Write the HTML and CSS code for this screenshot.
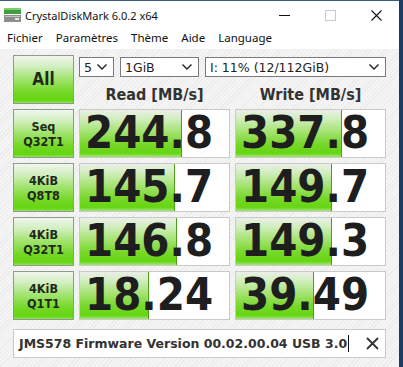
FILE: index.html
```html
<!DOCTYPE html>
<html lang="fr">
<head>
    <meta charset="UTF-8">
    <title>CrystalDiskMark 6.0.2 x64</title>
    <link rel="stylesheet" href="styles.css">
</head>
<body>
    <div class="window">
        <div class="titlebar">
            <svg class="app-icon" width="17" height="14" viewBox="0 0 17 14">
                <rect x="0" y="0" width="17" height="6" fill="#3f9f3f"/>
                <rect x="0" y="0" width="17" height="2" fill="#7ccf6c"/>
                <rect x="0" y="7" width="17" height="7" fill="#8e8e8e"/>
                <rect x="1" y="8" width="15" height="1" fill="#c4c4c4"/>
                <rect x="11" y="10" width="4" height="2" fill="#e6e6e6"/>
            </svg>
            <span class="title">CrystalDiskMark 6.0.2 x64</span>
            <div class="controls">
                <div class="ctl">
                    <svg width="11" height="11" viewBox="0 0 11 11"><line x1="0" y1="5.5" x2="11" y2="5.5" stroke="#111" stroke-width="1"/></svg>
                </div>
                <div class="ctl">
                    <svg width="11" height="11" viewBox="0 0 11 11"><rect x="0.5" y="0.5" width="10" height="10" fill="none" stroke="#c8c8c8" stroke-width="1"/></svg>
                </div>
                <div class="ctl">
                    <svg width="11" height="11" viewBox="0 0 11 11"><path d="M0.5 0.5 L10.5 10.5 M10.5 0.5 L0.5 10.5" stroke="#111" stroke-width="1.1"/></svg>
                </div>
            </div>
        </div>

        <div class="menubar">
            <span>Fichier</span>
            <span>Paramètres</span>
            <span>Thème</span>
            <span>Aide</span>
            <span>Language</span>
        </div>

        <div class="main">
            <div class="grid">
                <div class="btn btn-all">All</div>
                <div class="top">
                    <div class="selects">
                        <div class="select sel-count"><span>5</span><svg width="10" height="6" viewBox="0 0 10 6"><polyline points="0.5,0.5 5,5 9.5,0.5" fill="none" stroke="#222" stroke-width="1.4"/></svg></div>
                        <div class="select sel-size"><span>1GiB</span><svg width="10" height="6" viewBox="0 0 10 6"><polyline points="0.5,0.5 5,5 9.5,0.5" fill="none" stroke="#222" stroke-width="1.4"/></svg></div>
                        <div class="select sel-drive"><span>I: 11% (12/112GiB)</span><svg width="10" height="6" viewBox="0 0 10 6"><polyline points="0.5,0.5 5,5 9.5,0.5" fill="none" stroke="#222" stroke-width="1.4"/></svg></div>
                    </div>
                    <div class="heads">
                        <div>Read [MB/s]</div>
                        <div>Write [MB/s]</div>
                    </div>
                </div>

                <div class="btn">Seq<br>Q32T1</div>
                <div class="cell"><div class="bar" style="width: 101px"></div><span class="num">244.8</span></div>
                <div class="cell"><div class="bar" style="width: 105px"></div><span class="num">337.8</span></div>

                <div class="btn">4KiB<br>Q8T8</div>
                <div class="cell"><div class="bar" style="width: 94px"></div><span class="num">145.7</span></div>
                <div class="cell"><div class="bar" style="width: 95px"></div><span class="num">149.7</span></div>

                <div class="btn">4KiB<br>Q32T1</div>
                <div class="cell"><div class="bar" style="width: 96px"></div><span class="num">146.8</span></div>
                <div class="cell"><div class="bar" style="width: 95px"></div><span class="num">149.3</span></div>

                <div class="btn">4KiB<br>Q1T1</div>
                <div class="cell"><div class="bar" style="width: 68px"></div><span class="num">18.24</span></div>
                <div class="cell"><div class="bar" style="width: 77px"></div><span class="num">39.49</span></div>
            </div>

            <div class="comment">
                <span class="comment-text">JMS578 Firmware Version 00.02.00.04 USB 3.0</span><span class="caret"></span>
                <svg class="clear" width="13" height="13" viewBox="0 0 13 13"><path d="M1 1 L12 12 M12 1 L1 12" stroke="#333" stroke-width="1.8"/></svg>
            </div>
        </div>
    </div>
</body>
</html>
```

FILE: styles.css
```css
body {
    margin: 0;
    width: 403px;
    height: 367px;
    background: #1d3a62;
    overflow: hidden;
}
.window {
    width: 399px;
    height: 367px;
    background: #f2f2f2;
    border-top: 1px solid #3b5b80;
    box-sizing: border-box;
    display: flex;
    flex-direction: column;
}
.titlebar {
    height: 28px;
    background: #fff;
    display: flex;
    align-items: center;
    font-family: "Noto Sans", sans-serif;
    font-size: 11px;
    color: #111;
}
.app-icon {
    margin-left: 4px;
    margin-right: 4px;
}
.title {
    flex: 1;
}
.controls {
    display: flex;
    height: 100%;
}
.ctl {
    width: 46px;
    display: flex;
    align-items: center;
    justify-content: center;
}
.menubar {
    height: 20px;
    background: #fff;
    display: flex;
    align-items: center;
    padding-bottom: 4px;
    box-sizing: border-box;
    font-family: "Noto Sans", sans-serif;
    font-size: 11.5px;
    color: #111;
}
.menubar span {
    padding: 0 6.5px;
}
.menubar span:first-child {
    padding-left: 7px;
}
.main {
    flex: 1;
    padding: 6px 0 0 13px;
    background: repeating-linear-gradient(135deg, #f5f5f5 0 2px, #ebebeb 2px 3px);
}
.grid {
    display: grid;
    grid-template-columns: 61px 151px 151px;
    grid-auto-rows: 49px;
    column-gap: 5px;
    row-gap: 5px;
}
.btn {
    box-sizing: border-box;
    border: 1px solid #8f9a8c;
    background: linear-gradient(to bottom, #f0f6ec 0%, #d3efc2 22%, #9fe36c 50%, #72d723 78%, #66d512 94%, #8fe45a 100%);
    display: flex;
    align-items: center;
    justify-content: center;
    text-align: center;
    font-family: "DejaVu Sans Condensed", "DejaVu Sans", sans-serif;
    font-weight: bold;
    font-size: 12.5px;
    line-height: 15px;
    color: #1f2a1a;
}
.btn-all {
    font-size: 17px;
}
.top {
    grid-column: span 2;
    display: flex;
    flex-direction: column;
}
.selects {
    display: flex;
    gap: 6px;
    margin-top: 2px;
}
.select {
    box-sizing: border-box;
    height: 20px;
    border: 1px solid #7a7a7a;
    background: #fff;
    display: flex;
    align-items: center;
    justify-content: space-between;
    padding: 0 6px 0 4px;
    font-family: "DejaVu Sans", sans-serif;
    font-size: 12.5px;
    color: #222;
}
.sel-count {
    width: 35px;
}
.sel-size {
    width: 79px;
}
.sel-drive {
    width: 181px;
}
.heads {
    display: grid;
    grid-template-columns: 151px 151px;
    column-gap: 5px;
    margin-top: 8px;
    font-family: "DejaVu Sans Condensed", "DejaVu Sans", sans-serif;
    font-weight: bold;
    font-size: 16px;
    color: #333;
    text-align: center;
}
.cell {
    position: relative;
    box-sizing: border-box;
    border: 1px solid #c9c9c9;
    background: #fff;
    display: flex;
    align-items: center;
    padding-left: 5px;
}
.bar {
    position: absolute;
    left: 0;
    top: 0;
    bottom: 0;
    background: linear-gradient(to bottom, #eceee9 0%, #d2eec0 18%, #a6e374 45%, #78d82a 72%, #66d512 92%, #a2e77a 100%);
    border-right: 1px solid #4d9e1a;
}
.num {
    position: relative;
    font-family: "DejaVu Sans Condensed", "DejaVu Sans", sans-serif;
    font-weight: bold;
    font-size: 45px;
    line-height: 45px;
    color: #1e1e1e;
    margin-top: -3px;
}
.comment {
    box-sizing: border-box;
    width: 373px;
    height: 29px;
    margin-top: 9px;
    border: 1px solid #c9c9c9;
    background: #fff;
    display: flex;
    align-items: center;
    padding-left: 5px;
    font-family: "DejaVu Sans", sans-serif;
    font-weight: bold;
    font-size: 12.5px;
    color: #333;
}
.caret {
    width: 1px;
    height: 17px;
    background: #111;
    margin-left: 1px;
}
.clear {
    margin-left: auto;
    margin-right: 6px;
}
```
